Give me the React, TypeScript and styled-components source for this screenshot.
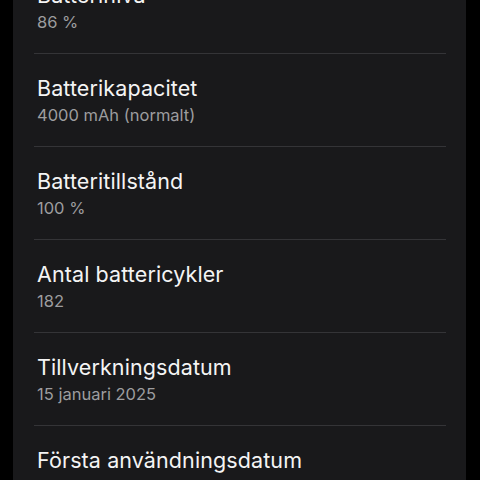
import styled, { createGlobalStyle } from 'styled-components';

const GlobalStyle = createGlobalStyle`
  html, body {
    margin: 0;
    padding: 0;
    background: #000;
    font-family: Inter, "Noto Sans", sans-serif;
  }
`;

const Viewport = styled.div`
  width: 480px;
  height: 480px;
  overflow: hidden;
  background: #000;
`;

const Card = styled.div`
  margin: -40px 14px 0 13px;
  background: #19191b;
  display: flex;
  flex-direction: column;
  padding: 0 20px 0 21px;
`;

const Row = styled.div<{ $first?: boolean }>`
  height: 93px;
  box-sizing: border-box;
  display: flex;
  flex-direction: column;
  padding: 18px 0 0 3px;
  border-top: 1px solid ${({ $first }) => ($first ? 'transparent' : '#343437')};
`;

const Title = styled.div`
  color: #f4f4f4;
  font-size: 21.5px;
  line-height: 32px;
  letter-spacing: 0.1px;
`;

const Value = styled.div`
  color: #9d9d9f;
  font-size: 16.5px;
  line-height: 22px;
`;

const items = [
  { title: 'Batterinivå', value: '86 %' },
  { title: 'Batterikapacitet', value: '4000 mAh (normalt)' },
  { title: 'Batteritillstånd', value: '100 %' },
  { title: 'Antal battericykler', value: '182' },
  { title: 'Tillverkningsdatum', value: '15 januari 2025' },
  { title: 'Första användningsdatum', value: '20 januari 2025' },
];

export default function App() {
  return (
    <Viewport>
      <GlobalStyle />
      <Card>
        {items.map((item, i) => (
          <Row key={item.title} $first={i === 0}>
            <Title>{item.title}</Title>
            <Value>{item.value}</Value>
          </Row>
        ))}
      </Card>
    </Viewport>
  );
}
